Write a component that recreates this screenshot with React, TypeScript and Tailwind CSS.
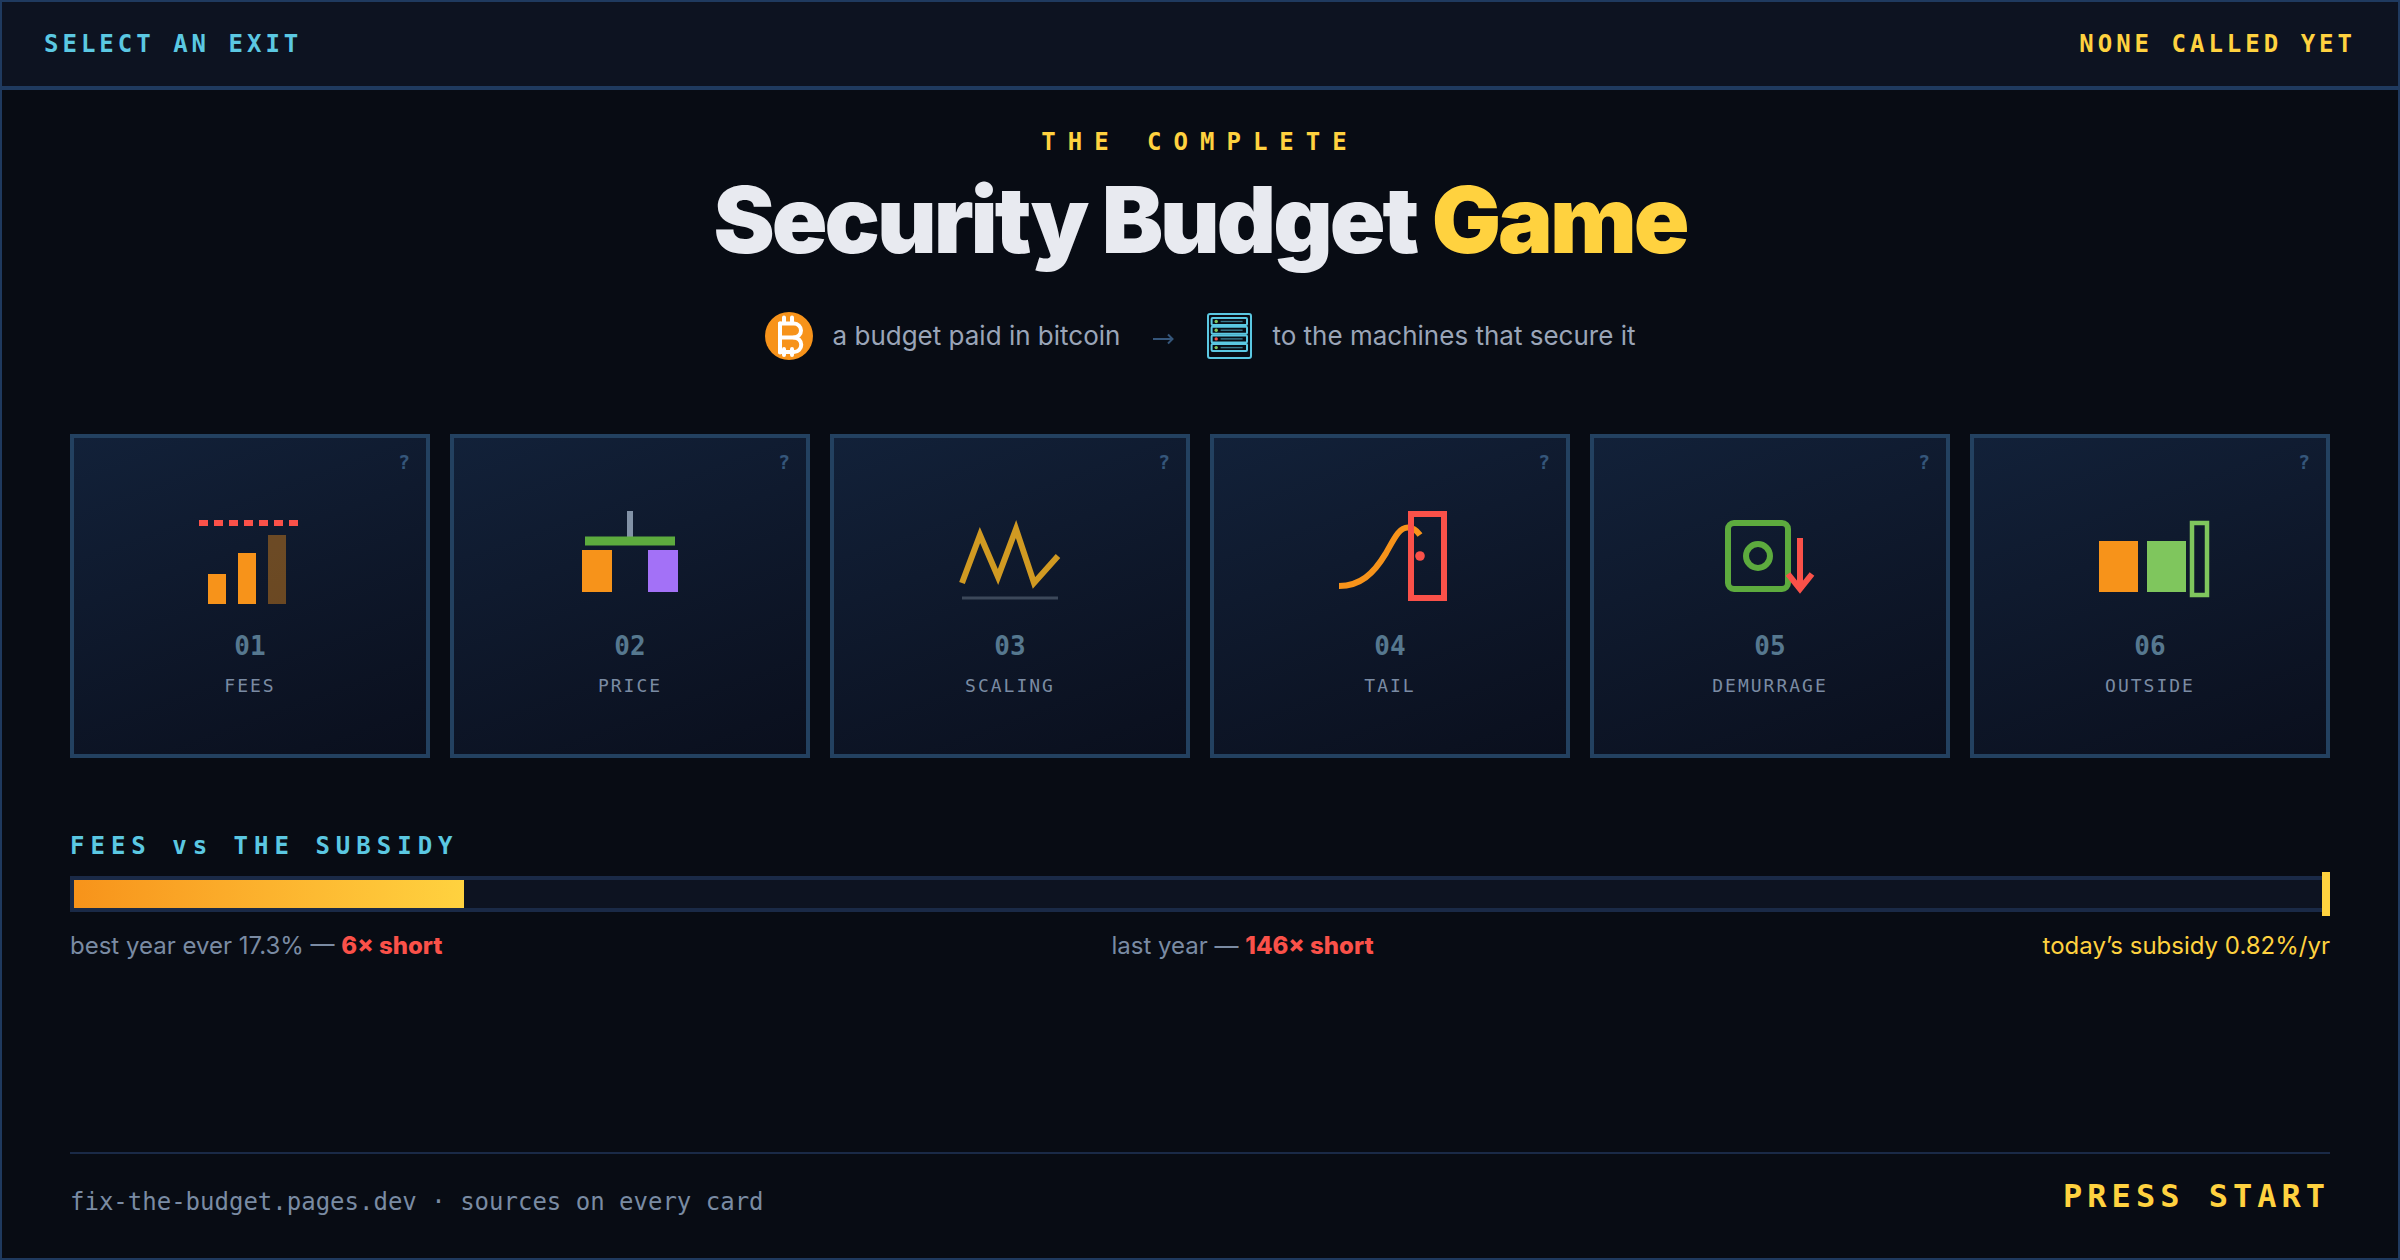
import type { ReactNode } from "react";

type Exit = {
  no: string;
  label: string;
  icon: ReactNode;
};

const exits: Exit[] = [
  {
    no: "01",
    label: "FEES",
    icon: (
      <>
        <path d="M3 5H37" stroke="#fa5149" strokeWidth="2" strokeDasharray="3 2" />
        <rect x="6" y="22" width="6" height="10" fill="#f7931a" />
        <rect x="16" y="15" width="6" height="17" fill="#f7931a" />
        <rect x="26" y="9" width="6" height="23" fill="#f7931a" opacity="0.4" />
      </>
    ),
  },
  {
    no: "02",
    label: "PRICE",
    icon: (
      <>
        <path d="M20 1V10" stroke="#8292a6" strokeWidth="2" />
        <path d="M5 11H35" stroke="#5dab3e" strokeWidth="3" />
        <rect x="4" y="14" width="10" height="14" fill="#f7931a" />
        <rect x="26" y="14" width="10" height="14" fill="#a371f7" />
      </>
    ),
  },
  {
    no: "03",
    label: "SCALING",
    icon: (
      <>
        <path d="M4 25L10 9L16 23L22 7L28 25L36 16" stroke="#d19a22" strokeWidth="2" />
        <path d="M4 30H36" stroke="#3c485a" strokeWidth="1" />
      </>
    ),
  },
  {
    no: "04",
    label: "TAIL",
    icon: (
      <>
        <path
          d="M3 26C10 26 14.5 22 18.5 15.3C21.5 10 23 6.5 26 6.5C27.6 6.5 29 7.6 30 9"
          stroke="#f7931a"
          strokeWidth="2"
        />
        <rect x="27" y="2" width="11" height="28" stroke="#fa5149" strokeWidth="2" />
        <circle cx="30" cy="16" r="1.6" fill="#fa5149" />
      </>
    ),
  },
  {
    no: "05",
    label: "DEMURRAGE",
    icon: (
      <>
        <rect x="6" y="5" width="20" height="22" rx="2" stroke="#5dab3e" strokeWidth="2" />
        <circle cx="16" cy="16" r="4" stroke="#5dab3e" strokeWidth="2" />
        <path d="M30 10V27M26 22L30 27L34 22" stroke="#fa5149" strokeWidth="2" />
      </>
    ),
  },
  {
    no: "06",
    label: "OUTSIDE",
    icon: (
      <>
        <rect x="3" y="11" width="13" height="17" fill="#f7931a" />
        <rect x="19" y="11" width="13" height="17" fill="#7fc65d" />
        <rect x="34" y="5" width="5" height="24" stroke="#7fc65d" strokeWidth="1.5" />
      </>
    ),
  },
];

const bestYearPct = 17.3;

function BitcoinIcon() {
  return (
    <svg viewBox="0 0 48 48" fill="none" className="size-12 shrink-0" aria-hidden="true">
      <circle cx="24" cy="24" r="24" fill="#f7931a" />
      <g stroke="#fff" strokeWidth="4" strokeLinecap="round" strokeLinejoin="round">
        <path d="M15 11.5V40.5" />
        <path d="M15 11.5H29A6.5 6.5 0 0 1 29 25.5H17" />
        <path d="M29 25.5A7 7 0 0 1 29 40H15" />
        <path d="M19 5.5V11M27 5.5V11M19 37V43M27 37V43" />
      </g>
    </svg>
  );
}

function ArrowIcon() {
  return (
    <svg viewBox="0 0 22 22" fill="none" className="mx-8 size-[22px] shrink-0" aria-hidden="true">
      <path d="M1 14H20M16 9.5L20.5 14L16 18.5" stroke="#35567a" strokeWidth="2" />
    </svg>
  );
}

function ServerIcon() {
  const rows = [
    { y: 6, light: "#7fc65d" },
    { y: 14.7, light: "#7fc65d" },
    { y: 23.4, light: "#fa5149" },
    { y: 32.1, light: "#7fc65d" },
  ];
  return (
    <svg viewBox="0 0 48 48" fill="none" className="size-12 shrink-0" aria-hidden="true">
      <rect x="2" y="2" width="43" height="44" rx="2" stroke="#5bc8e2" strokeWidth="2" />
      {rows.map((row) => (
        <g key={row.y}>
          <rect x="5.6" y={row.y} width="35.4" height="7" rx="1" stroke="#5bc8e2" strokeWidth="2" />
          <circle cx="10.2" cy={row.y + 3.5} r="1.7" fill={row.light} />
          <path d={`M14.6 ${row.y + 3.5}H36.6`} stroke="#38788c" strokeWidth="1.4" />
        </g>
      ))}
    </svg>
  );
}

function ExitCard({ exit }: { exit: Exit }) {
  return (
    <button
      type="button"
      className="relative flex flex-col items-center border-4 border-[#234160] bg-linear-160 from-[#122139] to-[#0a0f1d] pt-[70px] pb-14 font-['DejaVu_Sans_Mono',monospace]"
    >
      <span className="absolute top-3 right-4 text-[20px] leading-6 font-bold text-[#35567a]">?</span>
      <svg viewBox="0 0 40 32" fill="none" className="h-24 w-[120px]" aria-hidden="true">
        {exit.icon}
      </svg>
      <span className="mt-[26px] text-[26px] leading-8 font-bold text-[#56788f]">{exit.no}</span>
      <span className="mt-3 text-[18px] leading-6 tracking-[2px] text-[#7a8ba3]">{exit.label}</span>
    </button>
  );
}

export default function App() {
  return (
    <div className="flex min-h-screen flex-col border-2 border-[#1f3a5f] bg-[#080c14] font-[Inter,sans-serif]">
      <header className="flex h-[88px] items-center justify-between border-b-4 border-[#1f3a5f] bg-[#0d1321] px-[42px] font-['DejaVu_Sans_Mono',monospace] text-[24px] leading-7 font-bold tracking-[4px]">
        <span className="text-[#5bc8e2]">SELECT AN EXIT</span>
        <span className="text-[#ffd23f]">NONE CALLED YET</span>
      </header>

      <main className="flex grow flex-col px-[68px] pt-[38px]">
        <div className="flex flex-col items-center">
          <p className="font-['DejaVu_Sans_Mono',monospace] text-[24px] leading-7 font-bold tracking-[12px] text-[#ffd23f]">
            THE COMPLETE
          </p>
          <h1 className="mt-[18px] text-[92px] leading-[92px] font-black tracking-[-3px] text-[#e8eaf0]">
            Security Budget <span className="text-[#ffd23f]">Game</span>
          </h1>
          <div className="mt-[46px] flex items-center text-[26px] leading-8 text-[#9aa5b8]">
            <BitcoinIcon />
            <span className="ml-5">a budget paid in bitcoin</span>
            <ArrowIcon />
            <ServerIcon />
            <span className="ml-[18px]">to the machines that secure it</span>
          </div>
        </div>

        <section className="mt-[74px] grid grid-cols-6 gap-5">
          {exits.map((exit) => (
            <ExitCard key={exit.no} exit={exit} />
          ))}
        </section>

        <section className="mt-[74px]">
          <h2
            id="meter-title"
            className="font-['DejaVu_Sans_Mono',monospace] text-[24px] leading-7 font-bold tracking-[6px] text-[#5bc8e2]"
          >
            FEES vs THE SUBSIDY
          </h2>
          <div
            role="meter"
            aria-labelledby="meter-title"
            aria-valuemin={0}
            aria-valuemax={100}
            aria-valuenow={bestYearPct}
            className="relative mt-4 h-9 border-4 border-[#1a2a47] bg-[#0d1321]"
          >
            <div
              className="h-full bg-linear-to-r from-[#f7931a] to-[#ffd23f]"
              style={{ width: `${bestYearPct}%` }}
            />
            <div className="absolute -top-2 -right-1 -bottom-2 w-2 bg-[#ffd23f]" />
          </div>
          <div className="mt-[18px] flex justify-between text-[24px] leading-8 text-[#7a8ba3]">
            <span>
              best year ever 17.3% — <b className="font-extrabold text-[#fa5149]">6× short</b>
            </span>
            <span>
              last year — <b className="font-extrabold text-[#fa5149]">146× short</b>
            </span>
            <span className="text-[#ffd23f]">today’s subsidy 0.82%/yr</span>
          </div>
        </section>

        <footer className="mt-auto flex items-end justify-between border-t-2 border-[#1a2a47] pt-[22px] pb-[42px] font-['DejaVu_Sans_Mono',monospace]">
          <p className="text-[24px] leading-7 text-[#7a8ba3]">
            <a href="https://fix-the-budget.pages.dev">fix-the-budget.pages.dev</a> · sources on every card
          </p>
          <button type="button" className="text-[32px] leading-10 font-bold tracking-[5px] text-[#ffd23f]">
            PRESS START
          </button>
        </footer>
      </main>
    </div>
  );
}
